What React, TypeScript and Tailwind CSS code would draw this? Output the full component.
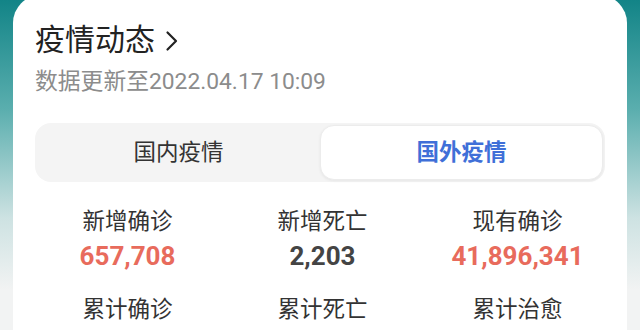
import React from "react";

const font = { fontFamily: 'Roboto, "Noto Sans CJK SC", "Noto Sans", sans-serif' };

function Stat({ label, value, color }: { label: string; value: string; color: string }) {
  return (
    <div className="flex flex-col items-center">
      <div className="text-[22.5px] leading-[30px] text-[#333333]">{label}</div>
      <div className={`mt-[3px] text-[26px] leading-[34px] font-bold ${color}`}>{value}</div>
    </div>
  );
}

function Label({ label }: { label: string }) {
  return (
    <div className="flex flex-col items-center">
      <div className="text-[22.5px] leading-[30px] text-[#333333]">{label}</div>
    </div>
  );
}

export default function App() {
  return (
    <div
      className="w-[640px] h-[330px] overflow-hidden bg-[linear-gradient(to_bottom,#128487_0%,#5aaeae_33%,#cde2e2_66%,#f2f3f3_88%)]"
      style={font}
    >
      <div className="mx-[13px] mt-[-5px] h-[340px] rounded-t-[28px] bg-white">
        <div className="pl-[22px] pt-[27px]">
          <div className="flex items-center text-[30px] leading-[36px] text-[#222222]">
            <span>疫情动态</span>
            <svg className="ml-[10px] mt-[2px]" width="14" height="24" viewBox="0 0 14 24">
              <path d="M2.5 3.5 L11 12 L2.5 20.5" fill="none" stroke="#222222" strokeWidth="2.2" strokeLinecap="round" strokeLinejoin="round" />
            </svg>
          </div>
          <div className="mt-[9px] text-[22.8px] leading-[30px] text-[#8c8c8c]">数据更新至2022.04.17 10:09</div>
        </div>
        <div className="mx-[22px] mt-[26px] grid h-[59px] grid-cols-2 rounded-[16px] bg-[#f4f4f4] p-[2px]">
          <div className="flex items-center justify-center text-[22.5px] text-[#333333]">国内疫情</div>
          <div className="flex items-center justify-center rounded-[14px] border border-[#ececec] bg-white text-[22.5px] font-bold text-[#3f6fd8] shadow-[0_1px_3px_rgba(0,0,0,0.06)]">
            国外疫情
          </div>
        </div>
        <div className="ml-[17px] mt-[24px] grid w-[585px] grid-cols-3">
          <Stat label="新增确诊" value="657,708" color="text-[#e86b5c]" />
          <Stat label="新增死亡" value="2,203" color="text-[#444444]" />
          <Stat label="现有确诊" value="41,896,341" color="text-[#e86b5c]" />
        </div>
        <div className="ml-[17px] mt-[21px] grid w-[585px] grid-cols-3">
          <Label label="累计确诊" />
          <Label label="累计死亡" />
          <Label label="累计治愈" />
        </div>
      </div>
    </div>
  );
}
